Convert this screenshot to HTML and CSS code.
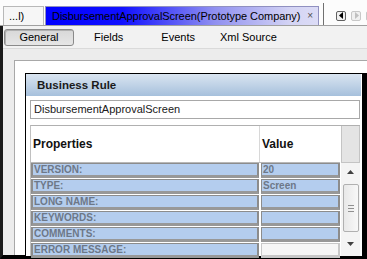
FILE: index.html
```html
<!DOCTYPE html>
<html lang="en">
<head>
    <meta charset="UTF-8">
    <title>Business Rule Editor</title>
    <link rel="stylesheet" href="styles.css">
</head>
<body>
    <div class="window">
        <!-- Document tabs -->
        <div class="tabbar">
            <div class="tab">...l)</div>
            <div class="tab active">
                <span class="tab-title">DisbursementApprovalScreen(Prototype Company)</span>
                <span class="close">&#215;</span>
            </div>
            <div class="tab-sep"></div>
            <div class="tab-nav">
                <span class="nav-btn"><svg width="5" height="7" viewBox="0 0 5 7"><path d="M4 0 L0 3.5 L4 7 Z" fill="#000"/></svg></span>
                <span class="nav-btn off"><svg width="5" height="7" viewBox="0 0 5 7"><path d="M1 0 L5 3.5 L1 7 Z" fill="#c0c0c0"/></svg></span>
                <span class="nav-btn off"></span>
            </div>
        </div>

        <div class="main">
            <!-- Section toolbar -->
            <div class="toolbar">
                <div class="tool pressed">General</div>
                <div class="tool fields">Fields</div>
                <div class="tool events">Events</div>
                <div class="tool xml">Xml Source</div>
            </div>

            <div class="outer-panel">
                <div class="rule-panel">
                    <div class="rule-header">Business Rule</div>
                    <div class="rule-name">DisbursementApprovalScreen</div>

                    <div class="grid">
                        <div class="grid-body">
                            <div class="grid-head">
                                <div class="col-prop">Properties</div>
                                <div class="col-val">Value</div>
                            </div>
                            <div class="row"><div class="cell prop">VERSION:</div><div class="cell val">20</div></div>
                            <div class="row"><div class="cell prop">TYPE:</div><div class="cell val">Screen</div></div>
                            <div class="row"><div class="cell prop">LONG NAME:</div><div class="cell val"></div></div>
                            <div class="row"><div class="cell prop">KEYWORDS:</div><div class="cell val"></div></div>
                            <div class="row"><div class="cell prop">COMMENTS:</div><div class="cell val"></div></div>
                            <div class="row"><div class="cell prop">ERROR MESSAGE:</div><div class="cell val empty"></div></div>
                        </div>
                        <div class="scrollbar">
                            <div class="scroll-corner"></div>
                            <div class="scroll-track">
                                <div class="scroll-arrow"><svg width="7" height="4" viewBox="0 0 7 4"><path d="M0 4 L3.5 0 L7 4 Z" fill="#404040"/></svg></div>
                                <div class="scroll-thumb"><span></span><span></span><span></span></div>
                                <div class="scroll-arrow"><svg width="7" height="4" viewBox="0 0 7 4"><path d="M0 0 L3.5 4 L7 0 Z" fill="#404040"/></svg></div>
                            </div>
                        </div>
                    </div>
                </div>
            </div>
        </div>
    </div>
</body>
</html>
```

FILE: styles.css
```css
body {
    margin: 0;
    font-family: "Liberation Sans", Arial, sans-serif;
    font-size: 11px;
    color: #000;
    background: #fff;
}

.window {
    width: 367px;
    height: 259px;
    overflow: hidden;
    display: flex;
    flex-direction: column;
}

/* tab strip */
.tabbar {
    height: 25px;
    flex: none;
    display: flex;
    align-items: flex-end;
    background: #fcfcfc;
    border-bottom: 1px solid #a0a0a0;
    padding-left: 3px;
}

.tab {
    height: 18px;
    line-height: 18px;
    padding: 0 5px;
    border: 1px solid #b8b8b8;
    border-bottom: none;
    background: #f6f6f6;
    font-size: 11px;
    width: 29px;
    white-space: nowrap;
    flex: none;
}

.tab.active {
    width: 261px;
    margin-left: 1px;
    padding: 0 5px 0 6px;
    display: flex;
    justify-content: space-between;
    border-color: #9090c0;
    background: linear-gradient(to right, #0000ff 0%, #1010ff 28%, #9090f0 62%, #d4d4f4 90%, #dcdcf6 100%);
}

.tab-title {
    font-size: 11px;
    letter-spacing: -0.05px;
}

.close {
    color: #505050;
    font-size: 10px;
}

.tab-sep {
    width: 1px;
    height: 22px;
    margin-left: 4px;
    background: #707070;
    flex: none;
}

.tab-nav {
    display: flex;
    gap: 5px;
    margin-left: 12px;
    align-self: center;
    margin-top: 6px;
}

.nav-btn {
    width: 8px;
    height: 8px;
    flex: none;
    border: 1px solid #606060;
    border-radius: 2px;
    display: flex;
    align-items: center;
    justify-content: center;
    background: #f0f0f0;
}

.nav-btn.off {
    border-color: #c8c8c8;
}

/* content area under the tabs */
.main {
    flex: 1;
    display: flex;
    flex-direction: column;
    background: #ececec;
    border-left: 3px solid #1a1a1a;
    border-bottom: 4px solid #000;
    min-height: 0;
}

.toolbar {
    height: 21px;
    flex: none;
    display: flex;
    align-items: center;
    padding-left: 1px;
    padding-top: 1px;
    background: #f2f2f2;
    border-bottom: 1px solid #dadada;
}

.tool {
    height: 15px;
    line-height: 15px;
    font-size: 11px;
    border: 1px solid transparent;
    white-space: nowrap;
}

.tool.pressed {
    width: 68px;
    text-align: center;
    border: 1px solid #8a8a8a;
    border-radius: 3px;
    background: linear-gradient(#d8d8d8, #e6e6e6);
    box-shadow: inset 1px 1px 0 #b0b0b0;
}

.tool.fields {
    margin-left: 19px;
}

.tool.events {
    margin-left: 36px;
}

.tool.xml {
    margin-left: 23px;
}

.outer-panel {
    flex: 1;
    margin: 11px 0 0 11px;
    border-top: 1px solid #a8a8a8;
    border-left: 1px solid #a8a8a8;
    background: #fff;
    padding: 12px 0 0 10px;
    min-height: 0;
}

.rule-panel {
    height: 100%;
    border-top: 1px solid #000;
    border-left: 1px solid #000;
    border-right: 5px solid #000;
    background: #fff;
    display: flex;
    flex-direction: column;
}

.rule-header {
    height: 22px;
    line-height: 22px;
    flex: none;
    padding-left: 11px;
    font-weight: bold;
    font-size: 11.5px;
    color: #1a1a1a;
    background: linear-gradient(#dae5f1, #a6c0dc);
    margin-right: 1px;
}

.rule-name {
    flex: none;
    height: 17px;
    line-height: 17px;
    margin: 4px 2px 0 4px;
    padding-left: 3px;
    border: 1px solid #a8a8a8;
    font-size: 11px;
    color: #202020;
}

.grid {
    flex: 1;
    display: flex;
    margin: 6px 2px 0 4px;
    border-top: 1px solid #b0b0b0;
    border-left: 1px solid #c0c0c0;
    min-height: 0;
}

.grid-body {
    flex: 1;
}

.grid-head {
    height: 36px;
    display: flex;
    border-bottom: 1px solid #b8b8b8;
    font-weight: bold;
    font-size: 12px;
    color: #111;
}

.col-prop {
    width: 226px;
    padding-left: 2px;
    line-height: 36px;
}

.col-val {
    flex: 1;
    border-left: 1px solid #d8d8d8;
    padding-left: 2px;
    line-height: 36px;
}

.row {
    display: flex;
    height: 16px;
}

.cell {
    height: 11px;
    line-height: 11px;
    border: 2px solid #8c8c8c;
    border-top-width: 1px;
    border-bottom-width: 3px;
    border-bottom-color: #989898;
    background: #b4cdee;
    font-weight: bold;
    font-size: 10px;
    color: #6d7888;
    padding-left: 1px;
}

.cell.prop {
    width: 223px;
}

.cell.val {
    flex: 1;
    margin-left: 2px;
    border-left-width: 1px;
}

.cell.empty {
    background: #f6f6f6;
    border-color: #c8c8c8;
}

.scrollbar {
    width: 19px;
    margin-left: 1px;
    display: flex;
    flex-direction: column;
}

.scroll-corner {
    height: 36px;
    background: #e4e4e4;
    border: 1px solid #c4c4c4;
    border-top: none;
}

.scroll-track {
    flex: 1;
    background: #f4f4f4;
    display: flex;
    flex-direction: column;
    align-items: center;
}

.scroll-arrow {
    height: 18px;
    display: flex;
    align-items: center;
    justify-content: center;
    width: 100%;
}

.scroll-thumb {
    width: 14px;
    height: 46px;
    margin: 3px 0;
    border: 1px solid #b0b0b0;
    border-radius: 2px;
    background: linear-gradient(to right, #e8e8e8, #f8f8f8);
    display: flex;
    flex-direction: column;
    align-items: center;
    justify-content: center;
    gap: 2px;
}

.scroll-thumb span {
    width: 6px;
    height: 1px;
    background: #909090;
}
```
